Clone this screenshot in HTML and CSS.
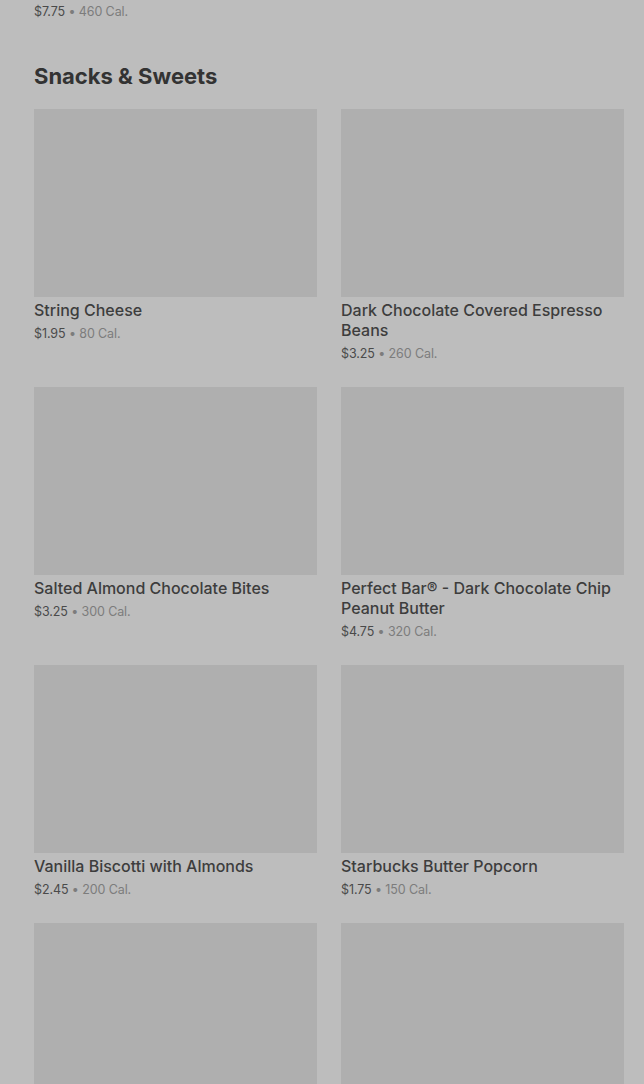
FILE: index.html
```html
<!DOCTYPE html>
<html>
<head>
    <title>Snacks &amp; Sweets</title>
    <link rel="stylesheet" href="styles.css">
</head>
<body>
    <div class="menu">
        <!-- tail of the previous section -->
        <div class="meta prev"><span class="price">$7.75</span> • <span class="cal">460 Cal.</span></div>

        <h2 class="section-title">Snacks &amp; Sweets</h2>

        <div class="grid">
            <div class="item">
                <div class="thumb"></div>
                <div class="name">String Cheese</div>
                <div class="meta"><span class="price">$1.95</span> • <span class="cal">80 Cal.</span></div>
            </div>
            <div class="item">
                <div class="thumb"></div>
                <div class="name">Dark Chocolate Covered Espresso Beans</div>
                <div class="meta"><span class="price">$3.25</span> • <span class="cal">260 Cal.</span></div>
            </div>
            <div class="item">
                <div class="thumb"></div>
                <div class="name">Salted Almond Chocolate Bites</div>
                <div class="meta"><span class="price">$3.25</span> • <span class="cal">300 Cal.</span></div>
            </div>
            <div class="item">
                <div class="thumb"></div>
                <div class="name">Perfect Bar® - Dark Chocolate Chip Peanut Butter</div>
                <div class="meta"><span class="price">$4.75</span> • <span class="cal">320 Cal.</span></div>
            </div>
            <div class="item">
                <div class="thumb"></div>
                <div class="name">Vanilla Biscotti with Almonds</div>
                <div class="meta"><span class="price">$2.45</span> • <span class="cal">200 Cal.</span></div>
            </div>
            <div class="item">
                <div class="thumb"></div>
                <div class="name">Starbucks Butter Popcorn</div>
                <div class="meta"><span class="price">$1.75</span> • <span class="cal">150 Cal.</span></div>
            </div>
            <div class="item">
                <div class="thumb"></div>
            </div>
            <div class="item">
                <div class="thumb"></div>
            </div>
        </div>
    </div>
</body>
</html>
```

FILE: styles.css
```css
html, body { margin: 0; padding: 0; background: #bdbdbd; }
body { font-family: Inter, "Liberation Sans", sans-serif; color: #3b3b3b; }
.menu { padding: 0 20px 0 34px; }
.meta { font-size: 12.5px; line-height: 20px; color: #7c7c7c; letter-spacing: -0.1px; }
.meta .price { color: #4a4a4a; }
.prev { padding-top: 2px; }
.section-title { margin: 40px 0 19px; font-size: 22px; line-height: 28px; font-weight: 700; color: #333; }
.grid { display: grid; grid-template-columns: 1fr 1fr; column-gap: 24px; row-gap: 23px; }
.thumb { height: 188px; background: #afafaf; }
.name { margin-top: 2.5px; font-size: 16px; line-height: 20px; font-weight: 500; color: #3d3d3d; }
.item .meta { margin-top: 4.5px; }
```
